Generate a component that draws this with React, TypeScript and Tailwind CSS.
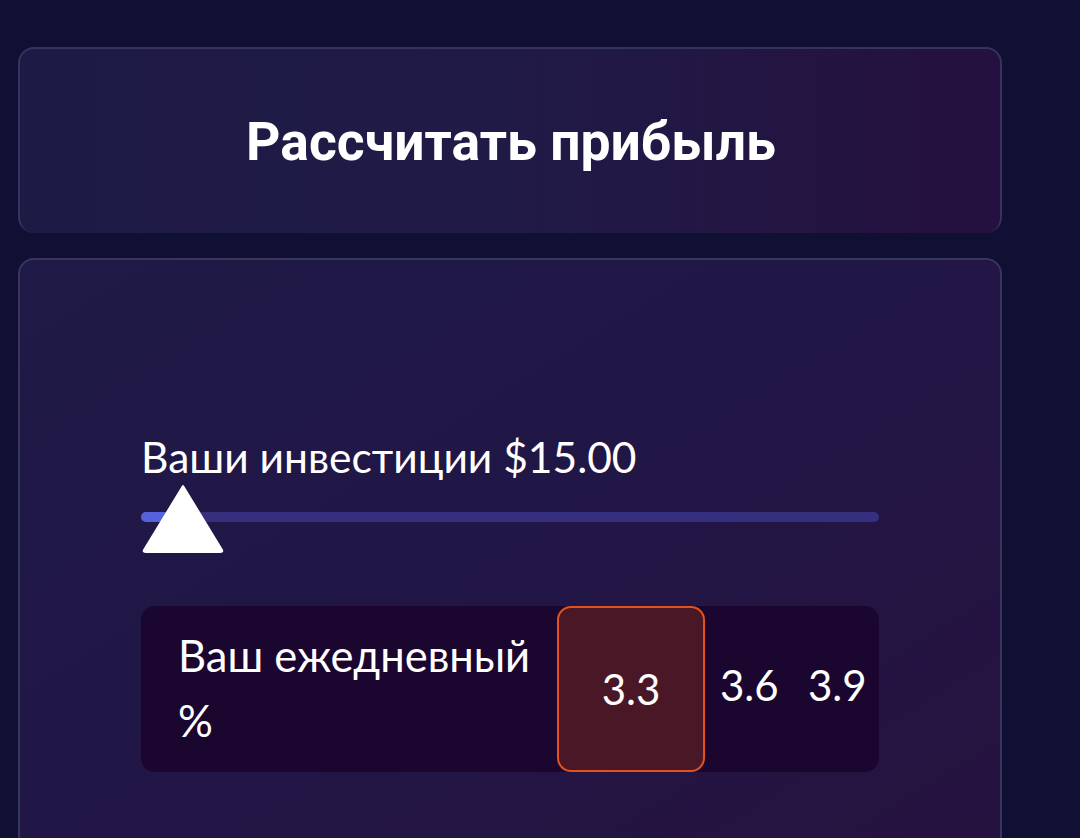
import React from "react";

const rates = ["3.3", "3.6", "3.9"];

export default function App() {
  const selected = "3.3";
  return (
    <div className="h-[838px] bg-[#0f1034] pt-[47px] pl-[18px] overflow-hidden">
      <div className="w-[984px] flex flex-col gap-[25px]">
        <div className="h-[186px] rounded-[16px] border-2 border-b-0 border-[#34345e] bg-gradient-to-r from-[#1d1b45] via-[#201a47] to-[#25103f] flex items-center justify-center">
          <h1 className="font-['Roboto',sans-serif] font-bold text-[53.5px] text-white leading-none pt-[1px] pl-[2px]">
            Рассчитать прибыль
          </h1>
        </div>

        <div className="h-[620px] rounded-[16px] border-2 border-[#38355f] bg-gradient-to-br from-[#1f1a47] via-[#211646] to-[#27123f] px-[121px] pt-[176px]">
          <div className="font-['Lato',sans-serif] text-white text-[42.5px] leading-none">Ваши инвестиции $15.00</div>

          <div className="relative mt-[33px] h-[10px] rounded-full bg-[#352f7e]">
            <div className="absolute left-0 top-0 h-[10px] w-[40px] rounded-l-full bg-[#5562db]" />
            <svg className="absolute left-[1px] -top-[28px]" width="82" height="70" viewBox="0 0 82 70">
              <path d="M41 2 L80 66 Q81 68 78 68 L4 68 Q1 68 2 66 Z" fill="#fff" stroke="#fff" strokeWidth="2" strokeLinejoin="round" />
            </svg>
          </div>

          <div className="mt-[84px] h-[166px] rounded-[14px] bg-[#1b0630] flex items-stretch">
            <div className="flex-1 pl-[37px] flex items-center font-['Lato',sans-serif] text-white text-[43.5px] leading-[65px] pb-[2px]">
              <span className="w-[375px]">Ваш ежедневный %</span>
            </div>
            {rates.map((r, i) =>
              r === selected ? (
                <div
                  key={r}
                  className="w-[148px] rounded-[14px] border-2 border-[#e2521a] bg-[#4a1726] flex items-center justify-center font-['Lato',sans-serif] text-white text-[42px] leading-none"
                >
                  {r}
                </div>
              ) : (
                <div
                  key={r}
                  className={
                    i === rates.length - 1
                      ? "w-[86px] flex items-center pl-[15px] pb-[8px] font-['Lato',sans-serif] text-white text-[42px] leading-none"
                      : "w-[88px] flex items-center pl-[15px] pb-[8px] font-['Lato',sans-serif] text-white text-[42px] leading-none"
                  }
                >
                  {r}
                </div>
              )
            )}
          </div>
        </div>
      </div>
    </div>
  );
}
